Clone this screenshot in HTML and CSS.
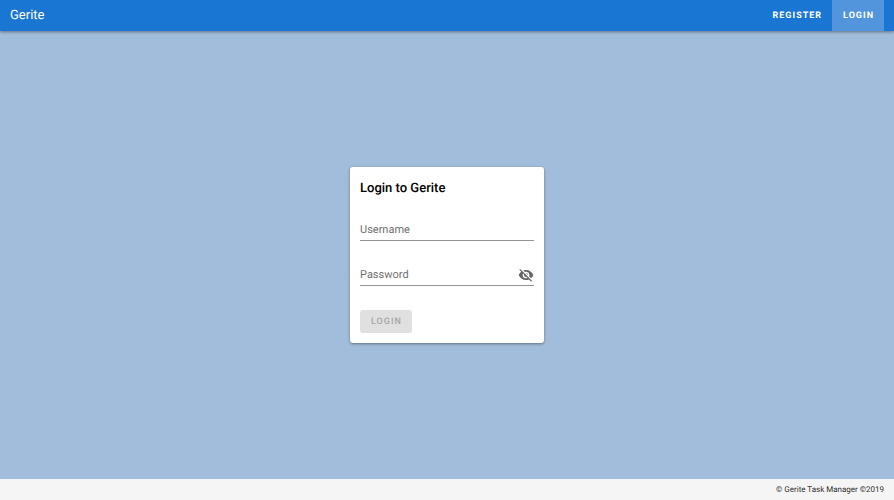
FILE: index.html
```html
<!DOCTYPE html>
<html lang="en">
<head>
<meta charset="utf-8">
<title>Gerite</title>
<link rel="stylesheet" href="styles.css">
</head>
<body>
<header class="toolbar">
  <a class="brand" href="#">Gerite</a>
  <nav class="nav">
    <a class="nav-link" href="#register">Register</a>
    <a class="nav-link active" href="#login">Login</a>
  </nav>
</header>
<main class="content">
  <form class="card">
    <h1 class="title">Login to Gerite</h1>
    <div class="field">
      <input id="username" type="text" placeholder="Username" aria-label="Username">
    </div>
    <div class="field">
      <input id="password" type="password" placeholder="Password" aria-label="Password">
      <button class="toggle" type="button" aria-label="Show password">
        <svg viewBox="0 0 24 24" width="16" height="16"><path d="M11.83,9L15,12.16C15,12.11 15,12.05 15,12A3,3 0 0,0 12,9C11.94,9 11.89,9 11.83,9M7.53,9.8L9.08,11.35C9.03,11.56 9,11.77 9,12A3,3 0 0,0 12,15C12.22,15 12.44,14.97 12.65,14.92L14.2,16.47C13.53,16.8 12.79,17 12,17A5,5 0 0,1 7,12C7,11.21 7.2,10.47 7.53,9.8M2,4.27L4.28,6.55L4.73,7C3.08,8.3 1.78,10 1,12C2.73,16.39 7,19.5 12,19.5C13.55,19.5 15.03,19.2 16.38,18.66L16.81,19.08L19.73,22L21,20.73L3.27,3M12,7A5,5 0 0,1 17,12C17,12.64 16.87,13.26 16.64,13.82L19.57,16.75C21.07,15.5 22.27,13.86 23,12C21.27,7.61 17,4.5 12,4.5C10.6,4.5 9.26,4.75 8,5.2L10.17,7.35C10.74,7.13 11.35,7 12,7Z"/></svg>
      </button>
    </div>
    <button class="submit" type="submit" disabled>Login</button>
  </form>
</main>
<footer class="footer">© Gerite Task Manager ©2019</footer>
</body>
</html>
```

FILE: styles.css
```css
* { box-sizing: border-box; }
body {
  margin: 0;
  min-height: 100vh;
  display: flex;
  flex-direction: column;
  background: #a2bcdb;
  font-family: Roboto, "Liberation Sans", sans-serif;
  color: rgba(0, 0, 0, .87);
  text-rendering: geometricPrecision;
}
.toolbar {
  display: flex;
  justify-content: space-between;
  height: 31px;
  padding: 0 10px;
  background: #1976d2;
  box-shadow: 0 1px 3px rgba(0, 0, 0, .4);
  line-height: 32px;
}
.brand {
  color: #fff;
  font-size: 13px;
  text-decoration: none;
}
.nav { display: flex; }
.nav-link {
  padding: 0 10px 0 11px;
  color: #fff;
  font-size: 9px;
  font-weight: 700;
  letter-spacing: 1px;
  text-transform: uppercase;
  text-decoration: none;
}
.nav-link.active { background: #5295dc; }
.content {
  flex: 1;
  display: flex;
  align-items: center;
  justify-content: center;
}
.card {
  width: 194px;
  padding: 10px;
  border-radius: 3px;
  background: #fff;
  box-shadow: 0 1px 3px rgba(0, 0, 0, .4);
}
.title {
  margin: 0 0 19px;
  color: #000;
  font-size: 13px;
  line-height: 24px;
  font-weight: 500;
}
.field {
  display: flex;
  align-items: center;
  height: 21px;
  margin-bottom: 24px;
  padding-bottom: 1px;
  border-bottom: 1px solid #949494;
}
.field input {
  flex: 1;
  min-width: 0;
  padding: 0;
  border: 0;
  outline: 0;
  background: none;
  color: inherit;
  font: 11px Roboto, sans-serif;
  text-rendering: inherit;
}
.field input::placeholder { color: #707070; opacity: 1; }
.toggle {
  display: flex;
  padding: 0;
  border: 0;
  background: none;
}
.toggle svg { fill: #666; }
.submit {
  display: block;
  height: 23px;
  padding: 0 10px 0 11px;
  border: 0;
  border-radius: 3px;
  background: #e0e0e0;
  color: #a6a6a6;
  font: 500 9px Roboto, sans-serif;
  letter-spacing: 1px;
  text-rendering: inherit;
  text-transform: uppercase;
}
.footer {
  height: 21px;
  padding: 0 10px;
  background: #f5f5f5;
  font-size: 8px;
  line-height: 21px;
  text-align: right;
}
```
